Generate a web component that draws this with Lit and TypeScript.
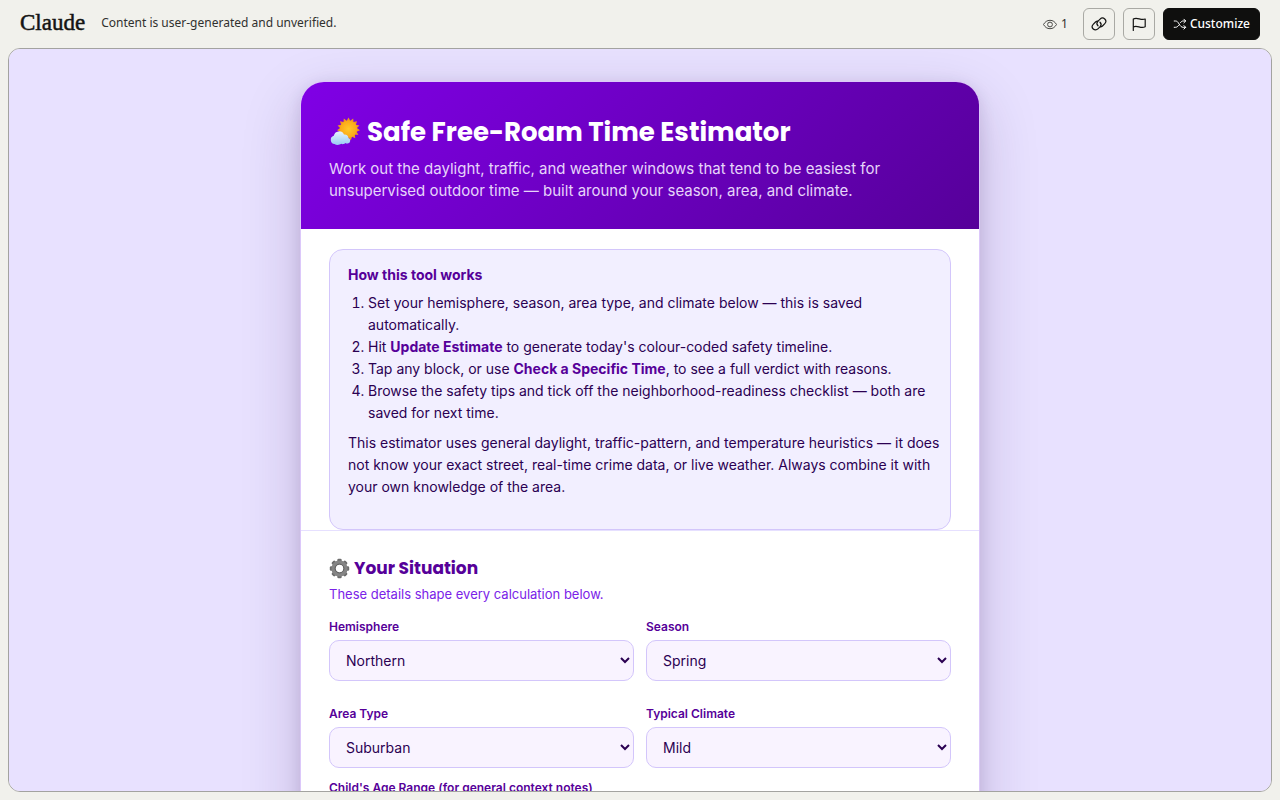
import { LitElement, html, css, svg } from "lit";
import { customElement, property } from "lit/decorators.js";

@customElement("select-field")
class SelectField extends LitElement {
  @property() label = "";
  @property({ type: Array }) options: string[] = [];

  static styles = css`
    :host { display: block; }
    .label {
      display: block;
      margin-bottom: 3px;
      font-size: 12px;
      line-height: 20px;
      font-weight: 600;
      color: #560099;
    }
    .select {
      display: block;
      box-sizing: border-box;
      width: 100%;
      height: 41px;
      padding: 0 0 1px 12px;
      border: 1px solid #d3c6fb;
      border-radius: 10px;
      background: #f9f3ff;
      color: #2b0052;
      font-family: inherit;
      font-size: 14px;
    }
  `;

  render() {
    return html`
      <label class="label" for="choice">${this.label}</label>
      <select class="select" id="choice">
        ${this.options.map((o) => html`<option>${o}</option>`)}
      </select>
    `;
  }
}

const ring = (cx: number, cy: number, count: number, outer: number, inner: number) =>
  Array.from({ length: count * 2 }, (_, i) => {
    const r = i % 2 ? inner : outer;
    const a = (Math.PI * i) / count - Math.PI / 2;
    return `${(cx + r * Math.cos(a)).toFixed(2)},${(cy + r * Math.sin(a)).toFixed(2)}`;
  }).join(" ");

const eyeIcon = svg`<svg viewBox="0 0 16 16" width="16" height="16" fill="none" stroke="currentColor" stroke-width="1">
  <path d="M1.500 8.500C3 5.800 5.200 4.300 8 4.300s5 1.500 6.500 4.200C13 11.200 10.800 12.700 8 12.700S3 11.200 1.500 8.500Z"/><circle cx="8" cy="8.500" r="2.400"/></svg>`;
const linkIcon = svg`<svg viewBox="0 0 20 20" width="20" height="20" fill="none" stroke="currentColor" stroke-width="1.200" stroke-linecap="round">
  <path d="M9 11.800a3.200 3.200 0 0 1-.2-4.400l2.300-2.300a3.200 3.200 0 0 1 4.700 4.600l-2.300 2.300a3.200 3.200 0 0 1-2.300.9"/>
  <path d="M11 8.200a3.200 3.200 0 0 1 .2 4.400l-2.300 2.300a3.200 3.200 0 0 1-4.700-4.600l2.300-2.300a3.200 3.200 0 0 1 2.300-.9"/></svg>`;
const flagIcon = svg`<svg viewBox="0 0 20 20" width="20" height="20" fill="none" stroke="currentColor" stroke-width="1.200" stroke-linecap="round" stroke-linejoin="round">
  <path d="M4.300 16.500V5c4.200-2.600 7.200 2 11.900 0v7.800c-4.700 2.400-7.700-2.100-11.900.2"/></svg>`;
const shuffleIcon = svg`<svg viewBox="0 0 14 14" width="14" height="14" fill="none" stroke="currentColor" stroke-width="1" stroke-linecap="round" stroke-linejoin="round">
  <path d="M1.200 4h1.300c1.500 0 2.400.9 3.600 3s2.400 3.300 4 3.300h2.500M1.200 10.300h1.300c1.300 0 2.100-.6 3-1.800M7.500 5.600C8.300 4.500 9 4 10.100 4h2.500M10.900 2.200 12.700 4l-1.800 1.800M10.900 8.500l1.800 1.800-1.800 1.800"/></svg>`;

const sunCloud = svg`<svg viewBox="0 0 32 32" width="32" height="32" aria-hidden="true">
  <defs>
    <linearGradient id="cloud" x1="0" y1="0" x2="0" y2="1"><stop offset="0" stop-color="#e8f4fd"/><stop offset="1" stop-color="#98caf4"/></linearGradient>
    <radialGradient id="disc"><stop offset="0" stop-color="#ffc928"/><stop offset="1" stop-color="#fba617"/></radialGradient>
  </defs>
  <polygon fill="#ee9a1c" points=${ring(19.5, 13, 15, 11.5, 8.5)}/>
  <circle cx="19.500" cy="13" r="8.600" fill="url(#disc)"/>
  <path fill="url(#cloud)" d="M5.500 28a4.200 4.200 0 0 1-.7-8.200 5.400 5.400 0 0 1 10.200-1.300 3.600 3.600 0 0 1 4.400 3.600 2.800 2.800 0 0 1-.6 5.400c-1 .2-1.900-.1-2.500-.5-1 1.300-3 1.400-4.200.8-1.500 1.300-4.800 1.500-6.600.2z"/></svg>`;
const gear = svg`<svg viewBox="0 0 21 21" width="21" height="21" aria-hidden="true">
  <g fill="#6c6c6c">${Array.from({ length: 8 }, (_, i) => svg`<rect x="8.300" y="0.800" width="4.400" height="5" rx="1.300" transform="rotate(${i * 45} 10.5 10.5)"/>`)}</g>
  <circle cx="10.500" cy="10.500" r="6" fill="none" stroke="#858585" stroke-width="4.200"/>
  <circle cx="10.500" cy="10.500" r="4.400" fill="none" stroke="#5c5c5c" stroke-width="1"/></svg>`;

@customElement("app-root")
class AppRoot extends LitElement {
  static styles = css`
    :host {
      display: flex;
      flex-direction: column;
      box-sizing: border-box;
      height: 100vh;
      padding: 0 8px 8px;
      background: #f1f1ec;
      color: #141413;
      font-family: Inter, "Noto Sans", sans-serif;
    }
    .topbar {
      display: flex;
      align-items: center;
      flex: none;
      height: 48px;
      padding: 0 12px;
      font-family: "Noto Sans", sans-serif;
      font-size: 12px;
    }
    .brand {
      margin-right: 16px;
      padding-bottom: 2px;
      font-family: "Liberation Serif", serif;
      font-size: 23px;
      line-height: 24px;
      color: #141413;
      text-decoration: none;
      -webkit-text-stroke: 0.5px currentColor;
    }
    .notice { flex: 1; color: #30302e; line-height: 20px; padding-bottom: 2px; }
    .actions { display: flex; align-items: center; gap: 8px; }
    .views { display: flex; align-items: center; gap: 3px; margin-right: 7px; color: #4a4a47; }
    .count { padding-bottom: 2px; color: #30302e; }
    .button {
      display: flex;
      align-items: center;
      justify-content: center;
      box-sizing: border-box;
      height: 32px;
      min-width: 32px;
      padding: 0 5px;
      border: 1px solid #a9a9a4;
      border-radius: 6px;
      background: transparent;
      color: #141413;
      font: inherit;
    }
    .primary { gap: 3px; padding: 0 9px; border-color: #0f0f0e; background: #0f0f0e; color: #fff; font-weight: 500; }
    .caption { padding-bottom: 2px; }
    .frame {
      flex: 1;
      min-height: 0;
      overflow-y: auto;
      scrollbar-width: none;
      padding: 32px 16px;
      border: 1px solid #a3a3a0;
      border-radius: 12px;
      background: #e8e1ff;
    }
    .card {
      max-width: 678px;
      margin: 0 auto;
      overflow: hidden;
      border: 1px solid #dcc8fa;
      border-radius: 24px;
      background: #fff;
      box-shadow: 0 20px 60px rgba(43, 0, 82, 0.2), 0 4px 16px rgba(43, 0, 82, 0.12);
    }
    .hero {
      padding: 32px 28px 27px;
      background: linear-gradient(135deg, #8000e6, #560099);
      color: #fff;
    }
    .title, .heading {
      display: flex;
      align-items: center;
      margin: 0;
      font-family: Poppins, Inter, sans-serif;
      font-weight: 700;
    }
    .title { gap: 6px; font-size: 26px; line-height: 36px; }
    .lead { margin: 8px 0 0; font-size: 15px; line-height: 22px; color: #e6d5fa; }
    .intro { padding: 20px 28px 0; }
    .guide {
      padding: 14px 8px 31px 18px;
      border: 1px solid #d3c6fb;
      border-radius: 14px;
      background: #f2efff;
      color: #2b0052;
      font-size: 14px;
      line-height: 22px;
    }
    .guide-title { margin: 0 0 6px; font-size: 14px; color: #560099; }
    .steps { margin: 0 0 8px; padding-left: 20px; }
    .steps strong { color: #560099; }
    .note { margin: 0; }
    .situation { padding: 24px 28px; border-top: 1px solid #e6e0ff; }
    .heading { gap: 4px; font-size: 17px; line-height: 27px; color: #560099; }
    .hint { margin: 2px 0 13px; font-size: 13px; line-height: 20px; color: #7a22e8; }
    .fields { display: grid; grid-template-columns: 1fr 1fr; gap: 23px 12px; margin-bottom: 10px; }
  `;

  render() {
    return html`
      <header class="topbar">
        <a class="brand" href="#">Claude</a>
        <span class="notice">Content is user-generated and unverified.</span>
        <div class="actions">
          <span class="views">${eyeIcon}<span class="count">1</span></span>
          <button class="button" aria-label="Copy link">${linkIcon}</button>
          <button class="button" aria-label="Report">${flagIcon}</button>
          <button class="button primary">${shuffleIcon}<span class="caption">Customize</span></button>
        </div>
      </header>
      <main class="frame">
        <article class="card">
          <header class="hero">
            <h1 class="title">${sunCloud}Safe Free-Roam Time Estimator</h1>
            <p class="lead">Work out the daylight, traffic, and weather windows that tend to be easiest for unsupervised outdoor time — built around your season, area, and climate.</p>
          </header>
          <section class="intro">
            <div class="guide">
              <h2 class="guide-title">How this tool works</h2>
              <ol class="steps">
                <li>Set your hemisphere, season, area type, and climate below — this is saved automatically.</li>
                <li>Hit <strong>Update Estimate</strong> to generate today's colour-coded safety timeline.</li>
                <li>Tap any block, or use <strong>Check a Specific Time</strong>, to see a full verdict with reasons.</li>
                <li>Browse the safety tips and tick off the neighborhood-readiness checklist — both are saved for next time.</li>
              </ol>
              <p class="note">This estimator uses general daylight, traffic-pattern, and temperature heuristics — it does not know your exact street, real-time crime data, or live weather. Always combine it with your own knowledge of the area.</p>
            </div>
          </section>
          <section class="situation">
            <h2 class="heading">${gear}Your Situation</h2>
            <p class="hint">These details shape every calculation below.</p>
            <div class="fields">
              <select-field label="Hemisphere" .options=${["Northern", "Southern"]}></select-field>
              <select-field label="Season" .options=${["Spring", "Summer", "Autumn", "Winter"]}></select-field>
              <select-field label="Area Type" .options=${["Suburban", "Urban", "Rural"]}></select-field>
              <select-field label="Typical Climate" .options=${["Mild", "Hot", "Cold"]}></select-field>
            </div>
            <select-field label="Child's Age Range (for general context notes)" .options=${["5–7", "8–10", "11–13"]}></select-field>
          </section>
        </article>
      </main>
    `;
  }
}
